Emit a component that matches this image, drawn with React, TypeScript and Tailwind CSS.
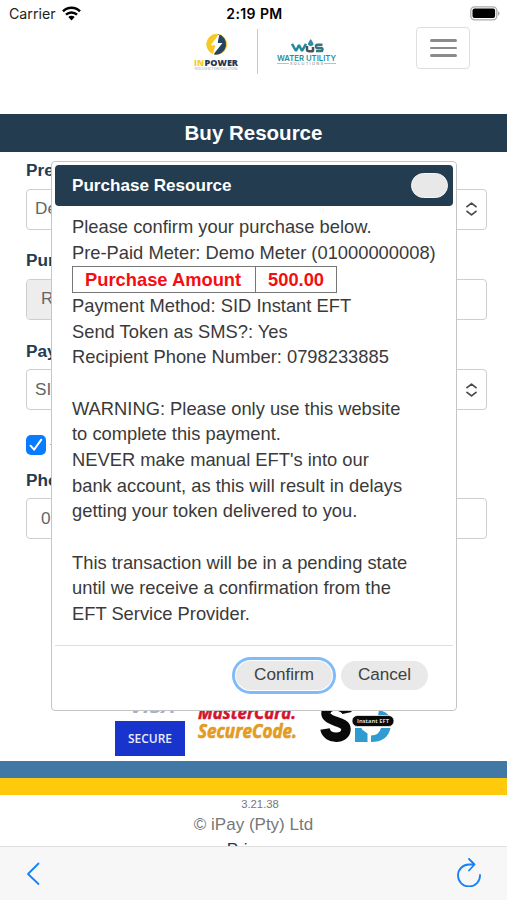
import type { ReactNode } from "react";

const details = [
  "Payment Method: SID Instant EFT",
  "Send Token as SMS?: Yes",
  "Recipient Phone Number: 0798233885",
];

const warning = [
  "WARNING: Please only use this website",
  "to complete this payment.",
  "NEVER make manual EFT's into our",
  "bank account, as this will result in delays",
  "getting your token delivered to you.",
];

const pending = [
  "This transaction will be in a pending state",
  "until we receive a confirmation from the",
  "EFT Service Provider.",
];

function StatusBar() {
  return (
    <div className="grid h-[27px] shrink-0 grid-cols-3 items-center pl-[9px] pr-[7px] font-['Inter',sans-serif] text-black">
      <div className="flex items-center gap-[6px]">
        <span className="pt-px text-[14.2px] leading-none text-[#222]">Carrier</span>
        <svg width="19" height="15" viewBox="0 0 19 15" fill="none" stroke="#000" strokeWidth="2.5">
          <path d="M1 5.4a12 12 0 0 1 17 0" />
          <path d="M4 8.7a7.8 7.8 0 0 1 11 0" />
          <path d="M6.3 11.1a4.5 4.5 0 0 1 6.4 0L9.5 14.4z" fill="#000" stroke="none" />
        </svg>
      </div>
      <span className="whitespace-nowrap pt-px text-center text-[14px] font-semibold leading-none tracking-[0.4px]">2:19 PM</span>
      <svg className="justify-self-end" width="30" height="15" viewBox="0 0 30 15">
        <rect x="0.8" y="0.8" width="26" height="13" rx="3.8" fill="#fff" stroke="#a9a9a9" strokeWidth="1.3" />
        <rect x="2.5" y="2.5" width="22.6" height="9.6" rx="2" />
        <path d="M28 5.2c2 .7 2 3.6 0 4.3z" fill="#a9a9a9" />
      </svg>
    </div>
  );
}

function InpowerLogo() {
  return (
    <svg width="46" height="40" viewBox="0 0 46 40">
      <circle cx="23.7" cy="11.3" r="10.5" fill="#f7c927" />
      <path d="M25 .9A10.5 10.500 0 0 1 21 21.500L25 11z" fill="#25445f" />
      <path d="M26.800 0L17.800 12.300h4.600L19.500 22.500l10-12.500h-5z" fill="#fff" />
      <g fontSize="9.2" fontWeight="800" fontFamily="Open Sans, sans-serif">
        <text x="1" y="33.2" textLength="10" lengthAdjust="spacingAndGlyphs" fill="#f5cc2d">IN</text>
        <text x="11.500" y="33.2" textLength="33.500" lengthAdjust="spacingAndGlyphs" fill="#25364d">POWER</text>
      </g>
      <text x="1.5" y="37" fontSize="2.6" fontFamily="Open Sans, sans-serif" textLength="43" lengthAdjust="spacingAndGlyphs" fill="#9ba3b5">INTELLIGENT POWER SOLUTIONS</text>
    </svg>
  );
}

function WaterLogo() {
  return (
    <svg width="62" height="28" viewBox="0 0 62 28">
      <g fill="none" strokeWidth="2.5" strokeLinejoin="bevel">
        <path d="M16 4.8l4 7.200 3-6 3 6 4-7.200" stroke="#25899c" />
        <path d="M31 7v3.500q0 1.800 2.500 1.800h3.500V8" stroke="#4b5259" />
        <path d="M46.500 5.800h-5q-1.500 0-1.500 1.600t1.500 1.500h3.500q1.500 0 1.500 1.500t-1.500 1.700H40" stroke="#36767f" />
      </g>
      <path d="M34.800 0q-3.600 4.500-2.600 6q2.600 2.300 5.200 0Q38 4.500 34.800 0z" fill="#318ca2" />
      <text x="1" y="21.5" fontSize="8.2" fontWeight="600" fontFamily="Inter, sans-serif" textLength="59" lengthAdjust="spacingAndGlyphs" fill="#258d9e">WATER UTILITY</text>
      <path d="M1 24.5h12M48 24.5h12" stroke="#a1a5a8" strokeWidth="0.7" />
      <text x="14" y="26" fontSize="3.9" fontFamily="Inter, sans-serif" textLength="33" fill="#747b80">SOLUTIONS</text>
    </svg>
  );
}

function Header() {
  return (
    <header className="flex h-[87px] shrink-0 items-start pl-[193px] pr-[37px]">
      <div className="mt-[6px]"><InpowerLogo /></div>
      <div className="ml-[18px] mt-[2px] h-[45px] w-px bg-[#c9c9c9]" />
      <div className="ml-[18px] mt-[12px]"><WaterLogo /></div>
      <button className="ml-auto flex h-[42px] w-[54px] flex-col items-center justify-center gap-[5px] rounded-[4px] border border-[#dedede]">
        <span className="h-[2.5px] w-[27px] rounded-full bg-[#8b8b8b]" />
        <span className="h-[2.5px] w-[27px] rounded-full bg-[#8b8b8b]" />
        <span className="h-[2.5px] w-[27px] rounded-full bg-[#8b8b8b]" />
      </button>
    </header>
  );
}

function Field({ label, value, select, disabled }: { label: string; value: string; select?: boolean; disabled?: boolean }) {
  return (
    <div className="h-[90.3px]">
      <div className="h-[36.5px] pt-[8px] text-[17.2px] font-bold leading-[20px] text-[#223c50]">{label}</div>
      <div className="flex h-[41px] items-center overflow-hidden rounded-[4px] border border-[#cecece] text-[17.2px] text-[#666]">
        <div className={`flex h-full items-center ${disabled ? "w-[45px] bg-[#ededed]" : ""} ${select ? "pl-[8px]" : "pl-[14px]"}`}>{value}</div>
        {select && (
          <svg className="ml-auto mr-[9px]" width="11" height="14" viewBox="0 0 11 14" fill="none" stroke="#484848" strokeWidth="1.7" strokeLinecap="round" strokeLinejoin="round">
            <path d="M1 4.7l4.5-3.6L10 4.7M1 9.3l4.5 3.6L10 9.3" />
          </svg>
        )}
      </div>
    </div>
  );
}

function PurchaseForm() {
  return (
    <div className="h-[548px] shrink-0 pl-[26px] pr-[20px]">
      <Field label="Pre-Paid Meter" value="Demo" select />
      <Field label="Purchase" value="R" disabled />
      <Field label="Payment" value="SID" select />
      <div className="flex h-[39px] items-center pt-[5px]">
        <span className="flex h-[20px] w-[20px] items-center justify-center rounded-[5px] bg-[#087cff]">
          <svg width="14" height="14" viewBox="0 0 14 14" fill="none" stroke="#fff" strokeWidth="2" strokeLinecap="round" strokeLinejoin="round">
            <path d="M1.5 7.7l3.6 4L12.3 1.7" />
          </svg>
        </span>
        <span className="ml-[4px] h-px w-[4px] bg-[#aaa]" />
      </div>
      <Field label="Phone" value="079" />
    </div>
  );
}

function CardLogos() {
  return (
    <div className="flex h-[61px] shrink-0 items-start pl-[115px]">
      <svg width="70" height="61" viewBox="0 0 70 61">
        <text x="15" y="12.8" fontSize="15" fontWeight="bold" fontStyle="italic" fontFamily="Open Sans, sans-serif" textLength="45" lengthAdjust="spacingAndGlyphs" fill="#a9aeca">VISA</text>
        <rect y="21" width="70" height="35" fill="#1934cd" />
        <text x="13" y="43" fontSize="12" fontWeight="600" fontFamily="Open Sans, sans-serif" textLength="44" lengthAdjust="spacingAndGlyphs" fill="#e9edff">SECURE</text>
      </svg>
      <svg className="ml-[12px]" width="102" height="50" viewBox="0 0 102 50" fontFamily="Open Sans, sans-serif" fontWeight="bold" fontStyle="italic">
        <text x="1" y="18.5" fontSize="17.5" textLength="98" lengthAdjust="spacingAndGlyphs" fill="#d5132e" stroke="#d5132e" strokeWidth="0.5">MasterCard.</text>
        <text x="1" y="37.5" fontSize="20" textLength="99" lengthAdjust="spacingAndGlyphs" fill="#e49b23" stroke="#e49b23" strokeWidth="0.7">SecureCode.</text>
      </svg>
      <svg className="ml-[20px]" width="78" height="50" viewBox="0 0 78 50">
        <path d="M28 13C26 4 6 3 7 14c1 8 20 7 20 15 0 11-19 11-21 0" fill="none" stroke="#090909" strokeWidth="9.5" />
        <path d="M36 28h6.500l.5 1.500 5.500 4V42H36zM52 35.500q8 0 10-7.500h9.500q-3 14-19.500 14z" fill="#309bd0" />
        <path d="M60 10q8 2 10 6H59z" fill="#309bd0" />
        <rect x="33" y="15.5" width="42" height="11" rx="5.5" fill="#080808" stroke="#fff" strokeWidth="0.7" />
        <text x="38" y="23.2" fontSize="6" fontWeight="bold" fontFamily="Open Sans, sans-serif" textLength="32" lengthAdjust="spacingAndGlyphs" fill="#d8d8d8">Instant EFT</text>
      </svg>
    </div>
  );
}

function Line({ children }: { children: ReactNode }) {
  return <p className="h-[25.7px] whitespace-nowrap leading-[25.7px]">{children}</p>;
}

function ConfirmDialog() {
  return (
    <div className="absolute left-[51px] top-[161px] flex h-[550px] w-[406px] flex-col rounded-[4px] border border-[#c5c5c5] bg-white p-[3px]">
      <div className="flex h-[41px] shrink-0 items-center justify-between rounded-[4px] bg-[#233c50] pl-[17px] pr-[5px]">
        <h2 className="pt-px text-[17.1px] font-bold text-white">Purchase Resource</h2>
        <button aria-label="Close" className="h-[25px] w-[37px] rounded-full border border-[#f6f6f6] bg-[#e8e8e8]" />
      </div>
      <div className="h-[438.5px] shrink-0 pl-[17px] pt-[8px] text-[18.34px] text-[#3a3a3a]">
        <Line>Please confirm your purchase below.</Line>
        <Line>Pre-Paid Meter: Demo Meter (01000000008)</Line>
        <div className="mb-[-0.6px] mt-[0.6px] flex h-[27.5px] w-[265px] border border-[#777] font-bold leading-[25px] text-[#f50d12]">
          <span className="w-[183px] border-r border-[#777] pl-[12px]">Purchase Amount</span>
          <span className="pl-[12px]">500.00</span>
        </div>
        {details.map((line) => <Line key={line}>{line}</Line>)}
        <div className="h-[25.7px]" />
        {warning.map((line) => <Line key={line}>{line}</Line>)}
        <div className="h-[25.7px]" />
        {pending.map((line) => <Line key={line}>{line}</Line>)}
      </div>
      <div className="flex flex-1 items-start justify-end gap-[9px] border-t border-[#dedede] pr-[25px] pt-[15px] text-[17.1px] leading-[28px] text-[#404040]">
        <button className="h-[29px] w-[96px] rounded-full bg-[#e9e9e9] ring-[3px] ring-[#80baf9] ring-offset-1">Confirm</button>
        <button className="h-[29px] w-[87px] rounded-full bg-[#e9e9e9]">Cancel</button>
      </div>
    </div>
  );
}

export default function App() {
  return (
    <div className="relative flex h-[900px] w-[507px] flex-col overflow-hidden bg-white font-['Liberation_Sans',sans-serif]">
      <StatusBar />
      <Header />
      <div className="flex h-[38px] shrink-0 items-center justify-center bg-[#233c50]">
        <h1 className="pt-px text-[20.5px] font-bold text-white">Buy Resource</h1>
      </div>
      <PurchaseForm />
      <CardLogos />
      <div className="h-[17px] shrink-0 bg-[#4278a5]" />
      <div className="h-[17px] shrink-0 bg-[#ffca0c]" />
      <footer className="h-[51px] shrink-0 overflow-hidden text-center text-[#777]">
        <p className="h-[18px] pl-[13px] text-[11.3px] leading-[19px]">3.21.38</p>
        <p className="h-[24px] text-[17px] leading-[24px]">© iPay (Pty) Ltd</p>
        <p className="pl-[2px] text-[17px] leading-[25px] text-[#223c50]">Privacy</p>
      </footer>
      <nav className="flex h-[54px] shrink-0 items-center justify-between border-t border-[#e0e0e0] bg-[#f7f7f7] pl-[26px] pr-[25px]">
        <svg width="15" height="24" viewBox="0 0 15 24" fill="none" stroke="#1682f5" strokeWidth="1.8" strokeLinecap="round" strokeLinejoin="round">
          <path d="M12.5 1.5L2 12l10.5 10" />
        </svg>
        <svg className="-mt-[4px]" width="26" height="30" viewBox="0 0 26 30" fill="none" stroke="#1682f5" strokeWidth="1.8" strokeLinecap="round" strokeLinejoin="round">
          <path d="M18.5 7.5h-5A11 11 0 1 0 24 18M13 2l5.5 5.5-5.5 6" />
        </svg>
      </nav>
      <ConfirmDialog />
    </div>
  );
}
